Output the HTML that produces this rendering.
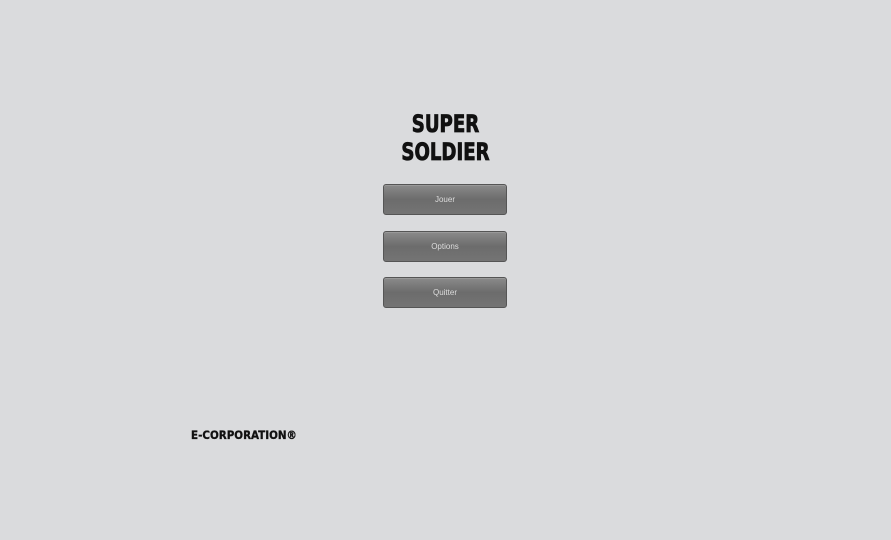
<!DOCTYPE html>
<html><head><style>
html,body{margin:0;padding:0;width:891px;height:540px;background:#dadbdd;overflow:hidden;position:relative;font-family:"Liberation Sans",sans-serif}
.t{position:absolute;left:0;width:891px;text-align:center;font-family:"DejaVu Sans Condensed","DejaVu Sans",sans-serif;font-weight:bold;font-size:24px;color:#111;letter-spacing:0;transform:scaleX(0.84);-webkit-text-stroke:0.8px #111}
.b{position:absolute;left:383px;width:122px;height:29px;border:1px solid #555;border-radius:3px;background:linear-gradient(#8a8a8a,#6c6c6c 50%,#747474);color:#ddd;font-size:8px;text-align:center;line-height:29px;box-shadow:inset 0 1px 0 #999}
.e{position:absolute;left:191px;top:428px;font-family:"DejaVu Sans Condensed","DejaVu Sans",sans-serif;font-weight:bold;font-size:11.5px;color:#111;-webkit-text-stroke:0.3px #111}
</style></head><body>
<div class="t" style="top:110px">SUPER</div>
<div class="t" style="top:138px">SOLDIER</div>
<div class="b" style="top:184px">Jouer</div>
<div class="b" style="top:231px">Options</div>
<div class="b" style="top:277px">Quitter</div>
<div class="e">E-CORPORATION®</div>
</body></html>
